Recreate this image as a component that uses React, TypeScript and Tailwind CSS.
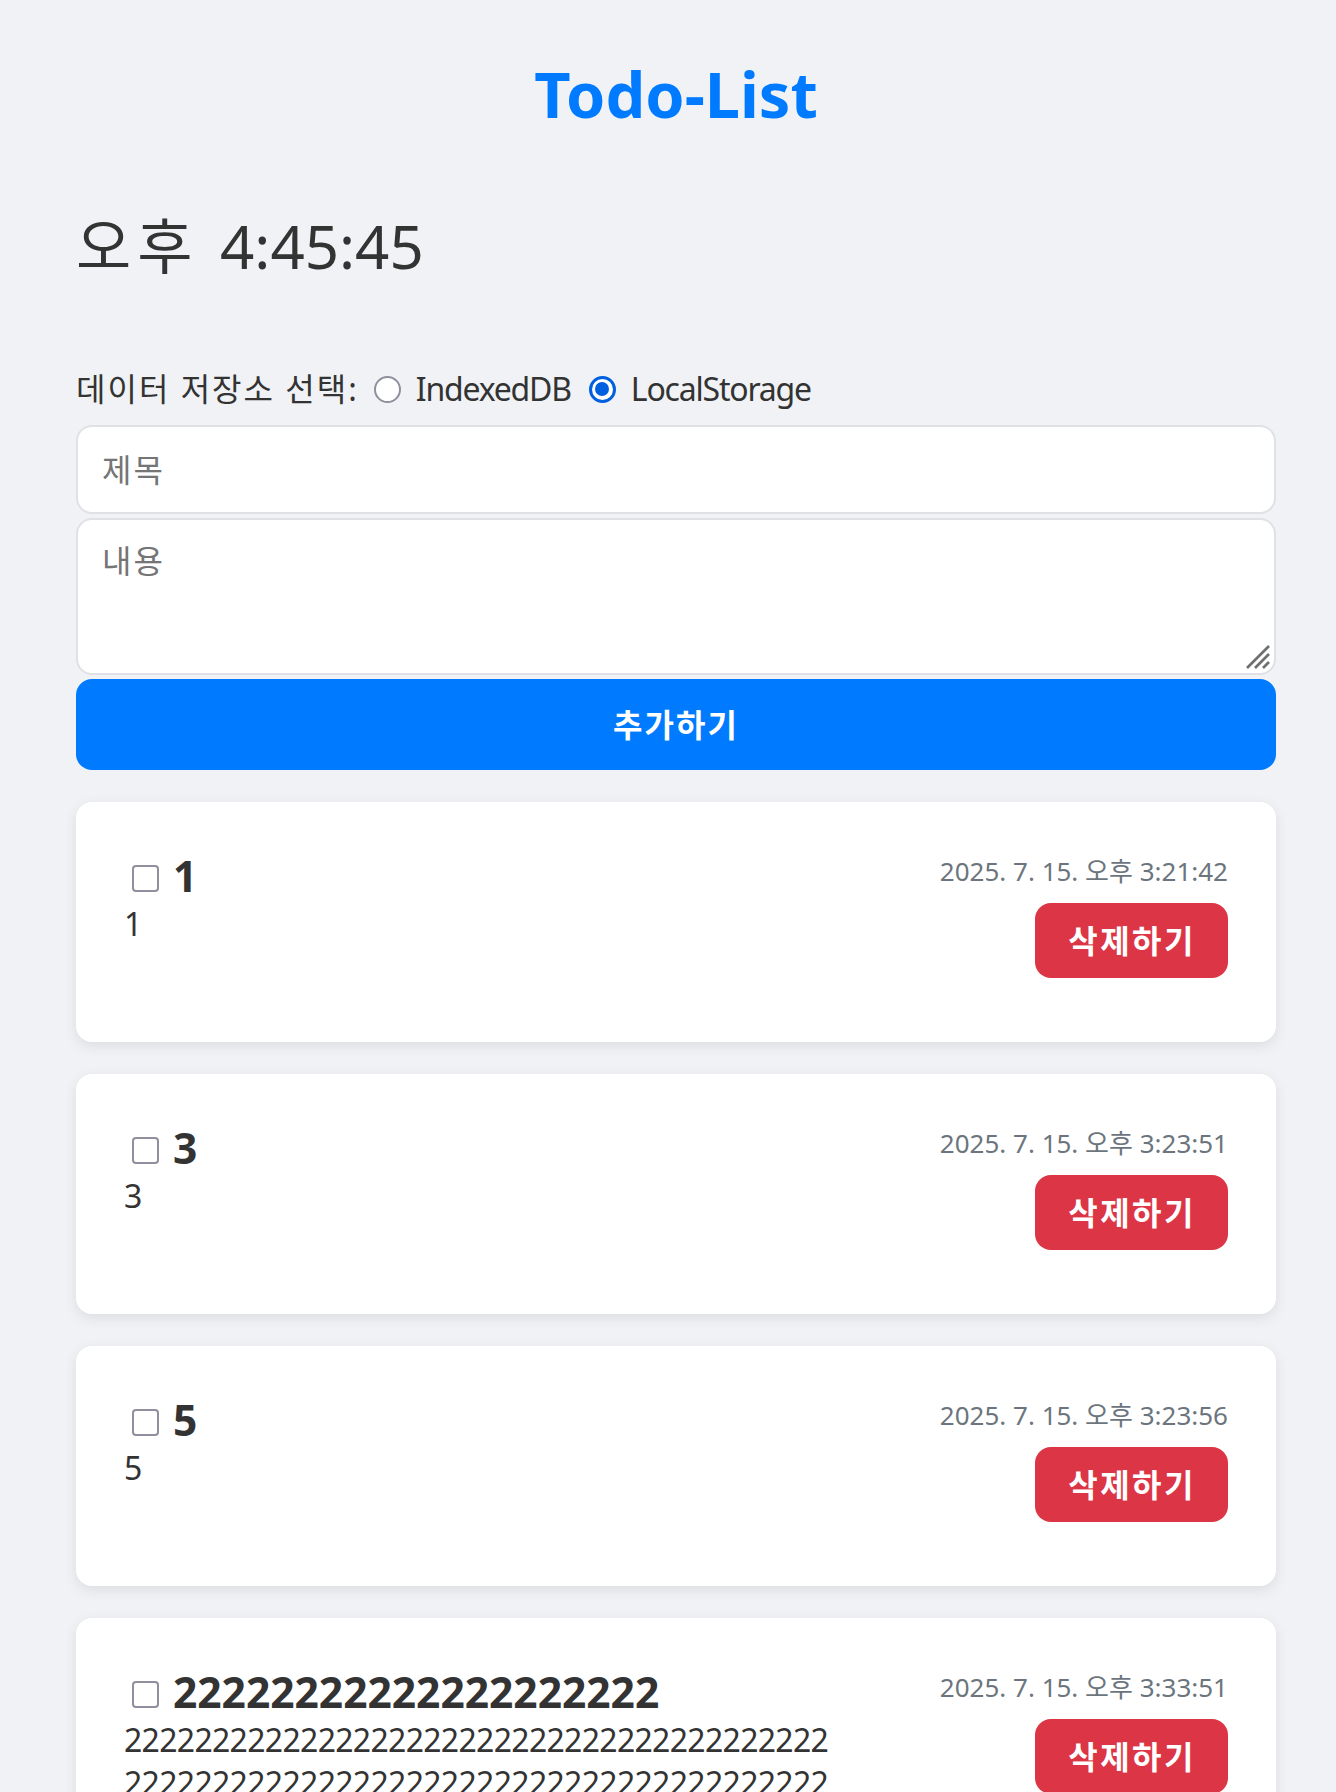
import React from "react";

const FONT = { fontFamily: '"Noto Sans", "Noto Sans CJK KR", sans-serif' };

function Radio({ checked }: { checked: boolean }) {
  return checked ? (
    <span className="flex h-[27px] w-[27px] shrink-0 items-center justify-center rounded-full border-[3px] border-[#0060df] bg-white">
      <span className="h-[14px] w-[14px] rounded-full bg-[#0060df]" />
    </span>
  ) : (
    <span className="block h-[27px] w-[27px] shrink-0 rounded-full border-2 border-[#8f8f9d] bg-white" />
  );
}

type Todo = { title: string; body: string[]; date: string };

const todos: Todo[] = [
  { title: "1", body: ["1"], date: "2025. 7. 15. 오후 3:21:42" },
  { title: "3", body: ["3"], date: "2025. 7. 15. 오후 3:23:51" },
  { title: "5", body: ["5"], date: "2025. 7. 15. 오후 3:23:56" },
  {
    title: "22222222222222222222",
    body: [
      "2222222222222222222222222222222222222222",
      "2222222222222222222222222222222222222222",
      "2222222222222222222222222222222222222222",
    ],
    date: "2025. 7. 15. 오후 3:33:51",
  },
];

function Card({ t }: { t: Todo }) {
  return (
    <div className="flex items-start justify-between rounded-[16px] bg-white pl-[48px] pr-[48px] pt-[48px] pb-[64px] shadow-[0_4px_14px_rgba(0,0,0,0.09)]">
      <div className="min-w-0">
        <div className="flex h-[52px] items-center">
          <span className="ml-[8px] mt-[4px] inline-block h-[27px] w-[27px] shrink-0 rounded-[4px] border-2 border-[#8f8f9d] bg-white" />
          <span className="ml-[14px] text-[42.5px] font-bold leading-[52px] text-[#333333]">{t.title}</span>
        </div>
        {t.body.map((line, i) => (
          <div key={i} className="whitespace-nowrap text-[32px] leading-[43px] tracking-[-0.7px] text-[#333333]">
            {line}
          </div>
        ))}
      </div>
      <div className="flex shrink-0 flex-col items-end">
        <div className="text-[26px] leading-[43px] text-[#6c757d]">{t.date}</div>
        <button className="mt-[10px] rounded-[16px] bg-[#dc3545] pl-[33px] pr-[32px] py-[16px] text-[32px] font-bold leading-[43px] tracking-[2.5px] text-white">
          삭제하기
        </button>
      </div>
    </div>
  );
}

export default function App() {
  return (
    <div className="min-h-[1792px] w-full bg-[#f0f2f5]" style={FONT}>
      <div className="ml-[76px] w-[1200px] pb-[40px]">
        <h1 className="pt-[51px] text-center text-[63px] font-bold leading-[86px] text-[#007bff]">Todo-List</h1>
        <div className="mt-[69px] text-[60px] leading-[80px] text-[#333333]">
          <span className="tracking-[6px]">오후 </span>4:45:45
        </div>
        <div className="mt-[81px] flex h-[44px] items-center text-[32px] leading-[44px] text-[#333333]">
          <span className="tracking-[2px]">데이터 저장소 선택:</span>
          <span className="ml-[15px] mr-[15px]">
            <Radio checked={false} />
          </span>
          <span className="tracking-[-1.2px]">IndexedDB</span>
          <span className="ml-[18px] mr-[15px]">
            <Radio checked={true} />
          </span>
          <span className="tracking-[-1.2px]">LocalStorage</span>
        </div>
        <div className="mt-[14px] flex h-[89px] items-center rounded-[16px] border-2 border-[#dfe1e5] bg-white px-[24px] text-[32px] leading-[45px] tracking-[2px] text-[#757575]">
          제목
        </div>
        <div className="relative mt-[4px] h-[157px] rounded-[16px] border-2 border-[#dfe1e5] bg-white px-[24px] pt-[18px] text-[32px] leading-[45px] tracking-[2px] text-[#757575]">
          내용
          <svg className="absolute bottom-[3px] right-[3px]" width="26" height="26" viewBox="0 0 26 26">
            <line x1="2" y1="24" x2="24" y2="2" stroke="#6f6f6f" strokeWidth="2.6" />
            <line x1="10" y1="24" x2="24" y2="10" stroke="#6f6f6f" strokeWidth="2.6" />
            <line x1="18" y1="24" x2="24" y2="18" stroke="#6f6f6f" strokeWidth="2.6" />
          </svg>
        </div>
        <button className="mt-[4px] flex h-[91px] w-full items-center justify-center rounded-[16px] bg-[#007bff] text-[32px] font-bold tracking-[2px] text-white">
          추가하기
        </button>
        <div className="mt-[32px] flex flex-col gap-[32px]">
          {todos.map((t, i) => (
            <Card key={i} t={t} />
          ))}
        </div>
      </div>
    </div>
  );
}
